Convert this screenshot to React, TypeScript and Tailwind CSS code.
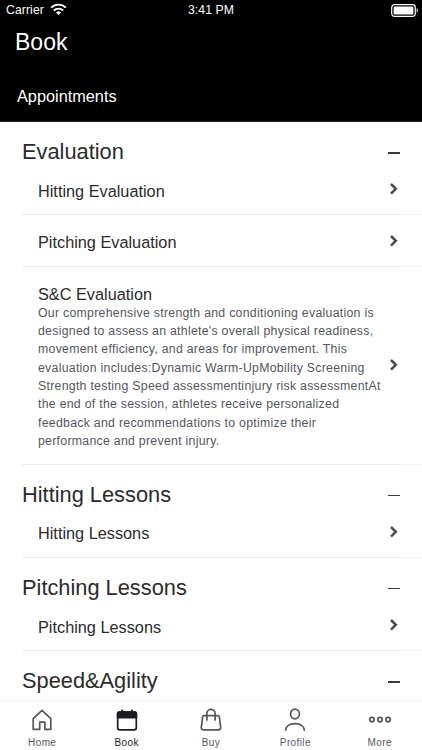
import React from 'react';

interface Item {
  name: string;
  description?: string;
}

interface Category {
  title: string;
  items: Item[];
}

const CATEGORIES: Category[] = [
  {
    title: 'Evaluation',
    items: [
      { name: 'Hitting Evaluation' },
      { name: 'Pitching Evaluation' },
      {
        name: 'S&C Evaluation',
        description:
          "Our comprehensive strength and conditioning evaluation is designed to assess an athlete's overall physical readiness, movement efficiency, and areas for improvement. This evaluation includes:Dynamic Warm-UpMobility Screening Strength testing Speed assessmentinjury risk assessmentAt the end of the session, athletes receive personalized feedback and recommendations to optimize their performance and prevent injury.",
      },
    ],
  },
  { title: 'Hitting Lessons', items: [{ name: 'Hitting Lessons' }] },
  { title: 'Pitching Lessons', items: [{ name: 'Pitching Lessons' }] },
  { title: 'Speed&Agility', items: [] },
];

const HomeIcon = () => (
  <svg width="24" height="24" viewBox="0 0 24 24" fill="none" stroke="currentColor" strokeWidth="1.7" strokeLinejoin="round">
    <path d="M3.2 21.4V10.6L12 2.4l8.8 8.2v10.8h-5.9v-7.3H9.7v7.3z" />
  </svg>
);

const BookIcon = () => (
  <svg width="24" height="24" viewBox="0 0 24 24" fill="none" stroke="currentColor" strokeWidth="1.7">
    <rect x="2.7" y="4" width="18.6" height="17.8" rx="2" />
    <path d="M2.6 9.7V5.5A1.5 1.5 0 0 1 4.1 4h15.8a1.5 1.5 0 0 1 1.5 1.5v4.2z" fill="currentColor" />
    <path d="M7.2 1.8V5M16.8 1.8V5" strokeWidth="2" />
  </svg>
);

const BuyIcon = () => (
  <svg width="24" height="24" viewBox="0 0 24 24" fill="none" stroke="currentColor" strokeWidth="1.7" strokeLinecap="round" strokeLinejoin="round">
    <path d="M5 7.6h14a1.3 1.3 0 0 1 1.3 1.1l1.4 10.7a2.1 2.1 0 0 1-2.1 2.4H4.4a2.1 2.1 0 0 1-2.1-2.4L3.7 8.7A1.3 1.3 0 0 1 5 7.6z" />
    <path d="M7.9 12V5.5a4.1 4.1 0 0 1 8.2 0V12" />
  </svg>
);

const ProfileIcon = () => (
  <svg width="24" height="24" viewBox="0 0 24 24" fill="none" stroke="currentColor" strokeWidth="1.7" strokeLinecap="round">
    <ellipse cx="12" cy="6" rx="4.4" ry="4.9" />
    <path d="M2.7 22.1c0-4 4-6.5 9.3-6.5s9.3 2.5 9.3 6.5" />
  </svg>
);

const MoreIcon = () => (
  <svg width="24" height="24" viewBox="0 0 24 24" fill="none" stroke="currentColor" strokeWidth="1.8">
    <circle cx="3.9" cy="11.6" r="2.2" />
    <circle cx="12" cy="11.6" r="2.2" />
    <circle cx="20.1" cy="11.6" r="2.2" />
  </svg>
);

const TABS = [
  { label: 'Home', icon: HomeIcon },
  { label: 'Book', icon: BookIcon, active: true },
  { label: 'Buy', icon: BuyIcon },
  { label: 'Profile', icon: ProfileIcon },
  { label: 'More', icon: MoreIcon },
];

const StatusBar = () => (
  <div className="grid h-5 grid-cols-3 items-center text-[12.2px] tracking-[0.1px]">
    <div className="flex items-center gap-1.5 pl-1.5">
      <span>Carrier</span>
      <svg width="17" height="13" viewBox="0 0 18 13" fill="none" stroke="currentColor" strokeWidth="2">
        <path d="M1.2 4.6a11 11 0 0 1 15.6 0" />
        <path d="M4 7.6a7.1 7.1 0 0 1 10 0" />
        <path d="M9 12.4 6.3 9.7a3.9 3.9 0 0 1 5.4 0z" fill="currentColor" stroke="none" />
      </svg>
    </div>
    <span className="text-center">3:41 PM</span>
    <div className="flex justify-end pr-[3px]">
      <svg width="28" height="13" viewBox="0 0 28 13" fill="none">
        <rect x="0.7" y="0.7" width="23.6" height="11.6" rx="2.8" stroke="currentColor" strokeWidth="1.2" />
        <rect x="2.6" y="2.6" width="19.8" height="7.8" rx="1" fill="currentColor" />
        <path d="M25.7 4.3c1.5.6 1.5 3.8 0 4.4z" fill="currentColor" />
      </svg>
    </div>
  </div>
);

const ItemRow: React.FC<{ item: Item }> = ({ item }) => (
  <div className="ml-[22px]">
    <div className="flex items-center pl-4 pr-[23px]">
      <div className="flex-1 pt-[17px] pb-[13.5px]">
        <div className="text-[16.3px] leading-[20px]">{item.name}</div>
        {item.description && (
          <p className="mr-[-20px] w-[346px] text-[12.3px] leading-[18.3px] tracking-[0.28px] text-[#56565c]">
            {item.description}
          </p>
        )}
      </div>
      <svg className="shrink-0" width="10" height="14" viewBox="0 0 10 14" fill="none" stroke="#4a4a4d" strokeWidth="2.5">
        <path d="M2 2l4.8 4.8L2 11.6" />
      </svg>
    </div>
    <div className="flex h-px">
      <div className="flex-1 bg-[#eaeaea]" />
      <div className="w-[22px] bg-[#f5f5f5]" />
    </div>
  </div>
);

const CategorySection: React.FC<{ category: Category }> = ({ category }) => (
  <section>
    <div className="flex h-[41.8px] items-start justify-between px-[22px] pt-4">
      <h2 className="text-[21.8px] leading-[28px]">{category.title}</h2>
      <span className="mt-[14px] h-[1.5px] w-3 bg-[#3c3c40]" />
    </div>
    {category.items.map((item) => (
      <ItemRow key={item.name} item={item} />
    ))}
  </section>
);

export default function App() {
  return (
    <div className="flex h-[750px] w-[422px] flex-col overflow-hidden bg-white font-['Liberation_Sans',Arial,sans-serif] text-[#2b2b2d]">
      <header className="h-[122px] shrink-0 border-b border-[#2a2a2a] bg-black text-white">
        <StatusBar />
        <h1 className="pl-[15px] pt-2 text-[23px] leading-[28px]">Book</h1>
        <div className="pl-[17px] pt-[30px] text-[16.3px] leading-[20px]">Appointments</div>
      </header>
      <main className="min-h-0 flex-1 overflow-hidden">
        {CATEGORIES.map((category) => (
          <CategorySection key={category.title} category={category} />
        ))}
      </main>
      <nav className="grid h-[50px] shrink-0 grid-cols-5 border-t border-[#f3f3f3] bg-white">
        {TABS.map(({ label, icon: Icon, active }) => (
          <div
            key={label}
            className={`flex flex-col items-center pt-[7px] ${active ? 'text-[#1c1c22]' : 'text-[#56565c]'}`}
          >
            <Icon />
            <span className="mt-[5px] text-[10px] leading-[12px] tracking-[0.4px]">{label}</span>
          </div>
        ))}
      </nav>
    </div>
  );
}
